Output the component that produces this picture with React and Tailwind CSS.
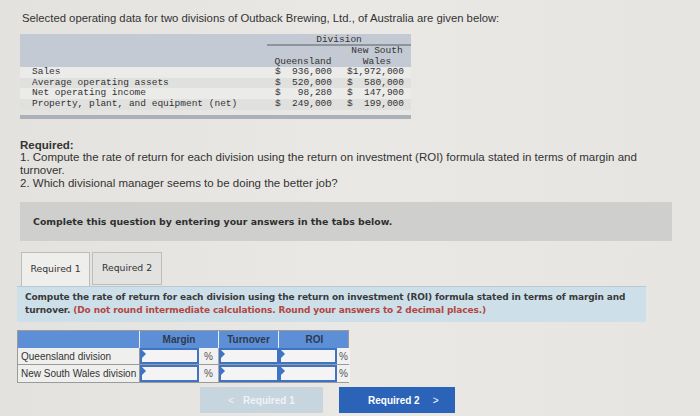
import React from 'react';

const sans = { fontFamily: '"Liberation Sans", Arial, sans-serif' };
const mono = { fontFamily: '"Liberation Mono", "Courier New", monospace' };
const verdana = { fontFamily: '"DejaVu Sans", Verdana, sans-serif' };

const rows = [
  ['Sales', '936,000', '1,972,000'],
  ['Average operating assets', '520,000', '580,000'],
  ['Net operating income', '98,280', '147,900'],
  ['Property, plant, and equipment (net)', '249,000', '199,000'],
];

const InputCell = () => (
  <div className="relative h-full border-2 border-[#3f74c4] bg-[#f4f4f4]">
    <span className="absolute left-0 top-0 w-0 h-0 border-t-[4px] border-b-[4px] border-l-[4px] border-t-transparent border-b-transparent border-l-[#3f74c4]" />
  </div>
);

const Pct = ({ last }) => (
  <div className={`h-full flex items-center justify-center text-[10px] text-[#555] bg-[#f1f1f1] ${last ? '' : 'border-r border-[#aaa]'}`}>%</div>
);

const App = () => {
  return (
    <div className="w-[700px] h-[416px] overflow-hidden bg-gradient-to-r from-[#e4e2de] via-[#e9e8e5] to-[#e6e5e2] text-[#2b2b2b]" style={sans}>
      <p className="pt-[11px] pl-[22px] text-[11.3px] leading-[14px] text-[#333]">
        Selected operating data for two divisions of Outback Brewing, Ltd., of Australia are given below:
      </p>

      <div className="ml-[20px] mt-[9px] w-[391px] text-[9.5px] text-[#333]" style={mono}>
        <div className="grid grid-cols-[247px_72px_72px] bg-[#c3cad3] h-[33px] leading-[10.5px]">
          <div />
          <div className="col-span-2 flex flex-col">
            <div className="text-center h-[12px] pt-[1px] border-b-2 border-[#8d949c]">Division</div>
            <div className="grid grid-cols-2 flex-1">
              <div className="flex items-end justify-center pb-[1px]">Queensland</div>
              <div className="flex flex-col items-center justify-end pb-[1px] pl-[4px]">
                <span>New South</span>
                <span>Wales</span>
              </div>
            </div>
          </div>
        </div>
        {rows.map((r, i) => (
          <div key={r[0]} className={`grid grid-cols-[247px_72px_72px] h-[10.7px] leading-[10.7px] ${i % 2 === 1 ? 'bg-[#e0e0df]' : 'bg-[#ebebea]'}`}>
            <div className="pl-[12px]">{r[0]}</div>
            <div className="flex justify-between pl-[8px] pr-[7px]"><span>$</span><span>{r[1]}</span></div>
            <div className="flex justify-between pl-[8px] pr-[7px]"><span>$</span><span>{r[2]}</span></div>
          </div>
        ))}
        <div className="mt-[5px] h-[4px] bg-[#aab1b9]" />
      </div>

      <div className="ml-[20px] mt-[20px] w-[640px] text-[11.5px] leading-[12.6px] text-[#333]">
        <p className="font-bold">Required:</p>
        <p>1. Compute the rate of return for each division using the return on investment (ROI) formula stated in terms of margin and turnover.</p>
        <p>2. Which divisional manager seems to be doing the better job?</p>
      </div>

      <div className="ml-[20px] mt-[13px] w-[652px] h-[39px] bg-[#cfcfce] flex items-center pl-[13px]">
        <p className="text-[9.4px] font-bold text-[#2f2f2f]" style={verdana}>
          Complete this question by entering your answers in the tabs below.
        </p>
      </div>

      <div className="ml-[21px] mt-[11px] flex gap-[2px] items-end">
        <div className="w-[69px] h-[34px] bg-[#eeeeec] border border-b-0 border-[#bdbdbd] flex items-center justify-center text-[9.3px] text-[#333] pb-[2px]" style={verdana}>
          Required 1
        </div>
        <div className="w-[70px] h-[33px] mb-[1px] bg-[#e2e2e0] border border-[#bdbdbd] flex items-center justify-center text-[9.3px] text-[#333] pb-[2px]" style={verdana}>
          Required 2
        </div>
      </div>

      <div className="ml-[17px] w-[629px] h-[36px] bg-[#cde0ea] border-t border-[#b9c9d3] px-[8px] pt-[4px] text-[9px] leading-[13px] font-bold text-[#3a3a3a] tracking-[-0.12px]" style={verdana}>
        <p>
          Compute the rate of return for each division using the return on investment (ROI) formula stated in terms of margin and turnover. <span className="text-[#b5453f]">(Do not round intermediate calculations. Round your answers to 2 decimal places.)</span>
        </p>
      </div>

      <div className="ml-[17px] mt-[8px] w-[332px] border border-[#9a9a9a] text-[10px]">
        <div className="grid grid-cols-[122px_59px_20px_60px_58px_13px] h-[17px] bg-[#5d8fd7] text-[#2d3a4f] font-bold text-[10px]">
          <div className="border-r border-[#e8eef8]" />
          <div className="col-span-2 flex items-center justify-center border-r border-[#e8eef8]">Margin</div>
          <div className="flex items-center justify-center border-r border-[#e8eef8]">Turnover</div>
          <div className="col-span-2 flex items-center justify-center">ROI</div>
        </div>
        {['Queensland division', 'New South Wales division'].map((name, i) => (
          <div key={name} className={`grid grid-cols-[122px_59px_20px_60px_58px_13px] h-[17px] ${i === 0 ? 'border-b border-[#9a9a9a]' : ''}`}>
            <div className="flex items-center pl-[3px] bg-[#efefee] border-r border-[#9a9a9a] text-[#333] whitespace-nowrap">{name}</div>
            <InputCell />
            <Pct />
            <InputCell />
            <InputCell />
            <Pct last />
          </div>
        ))}
      </div>

      <div className="mt-[4px] ml-[200px] flex gap-[16px]">
        <button className="w-[123px] h-[26px] bg-[#c7d5df] text-[#eef3f7] text-[10px] font-bold flex items-center justify-center gap-[9px]">
          <span className="font-normal">&lt;</span>
          <span>Required 1</span>
        </button>
        <button className="w-[116px] h-[26px] bg-[#2b63b9] text-white text-[10px] font-bold flex items-center pl-[29px] gap-[13px]">
          <span>Required 2</span>
          <span className="font-normal">&gt;</span>
        </button>
      </div>
    </div>
  );
};

export default App;
